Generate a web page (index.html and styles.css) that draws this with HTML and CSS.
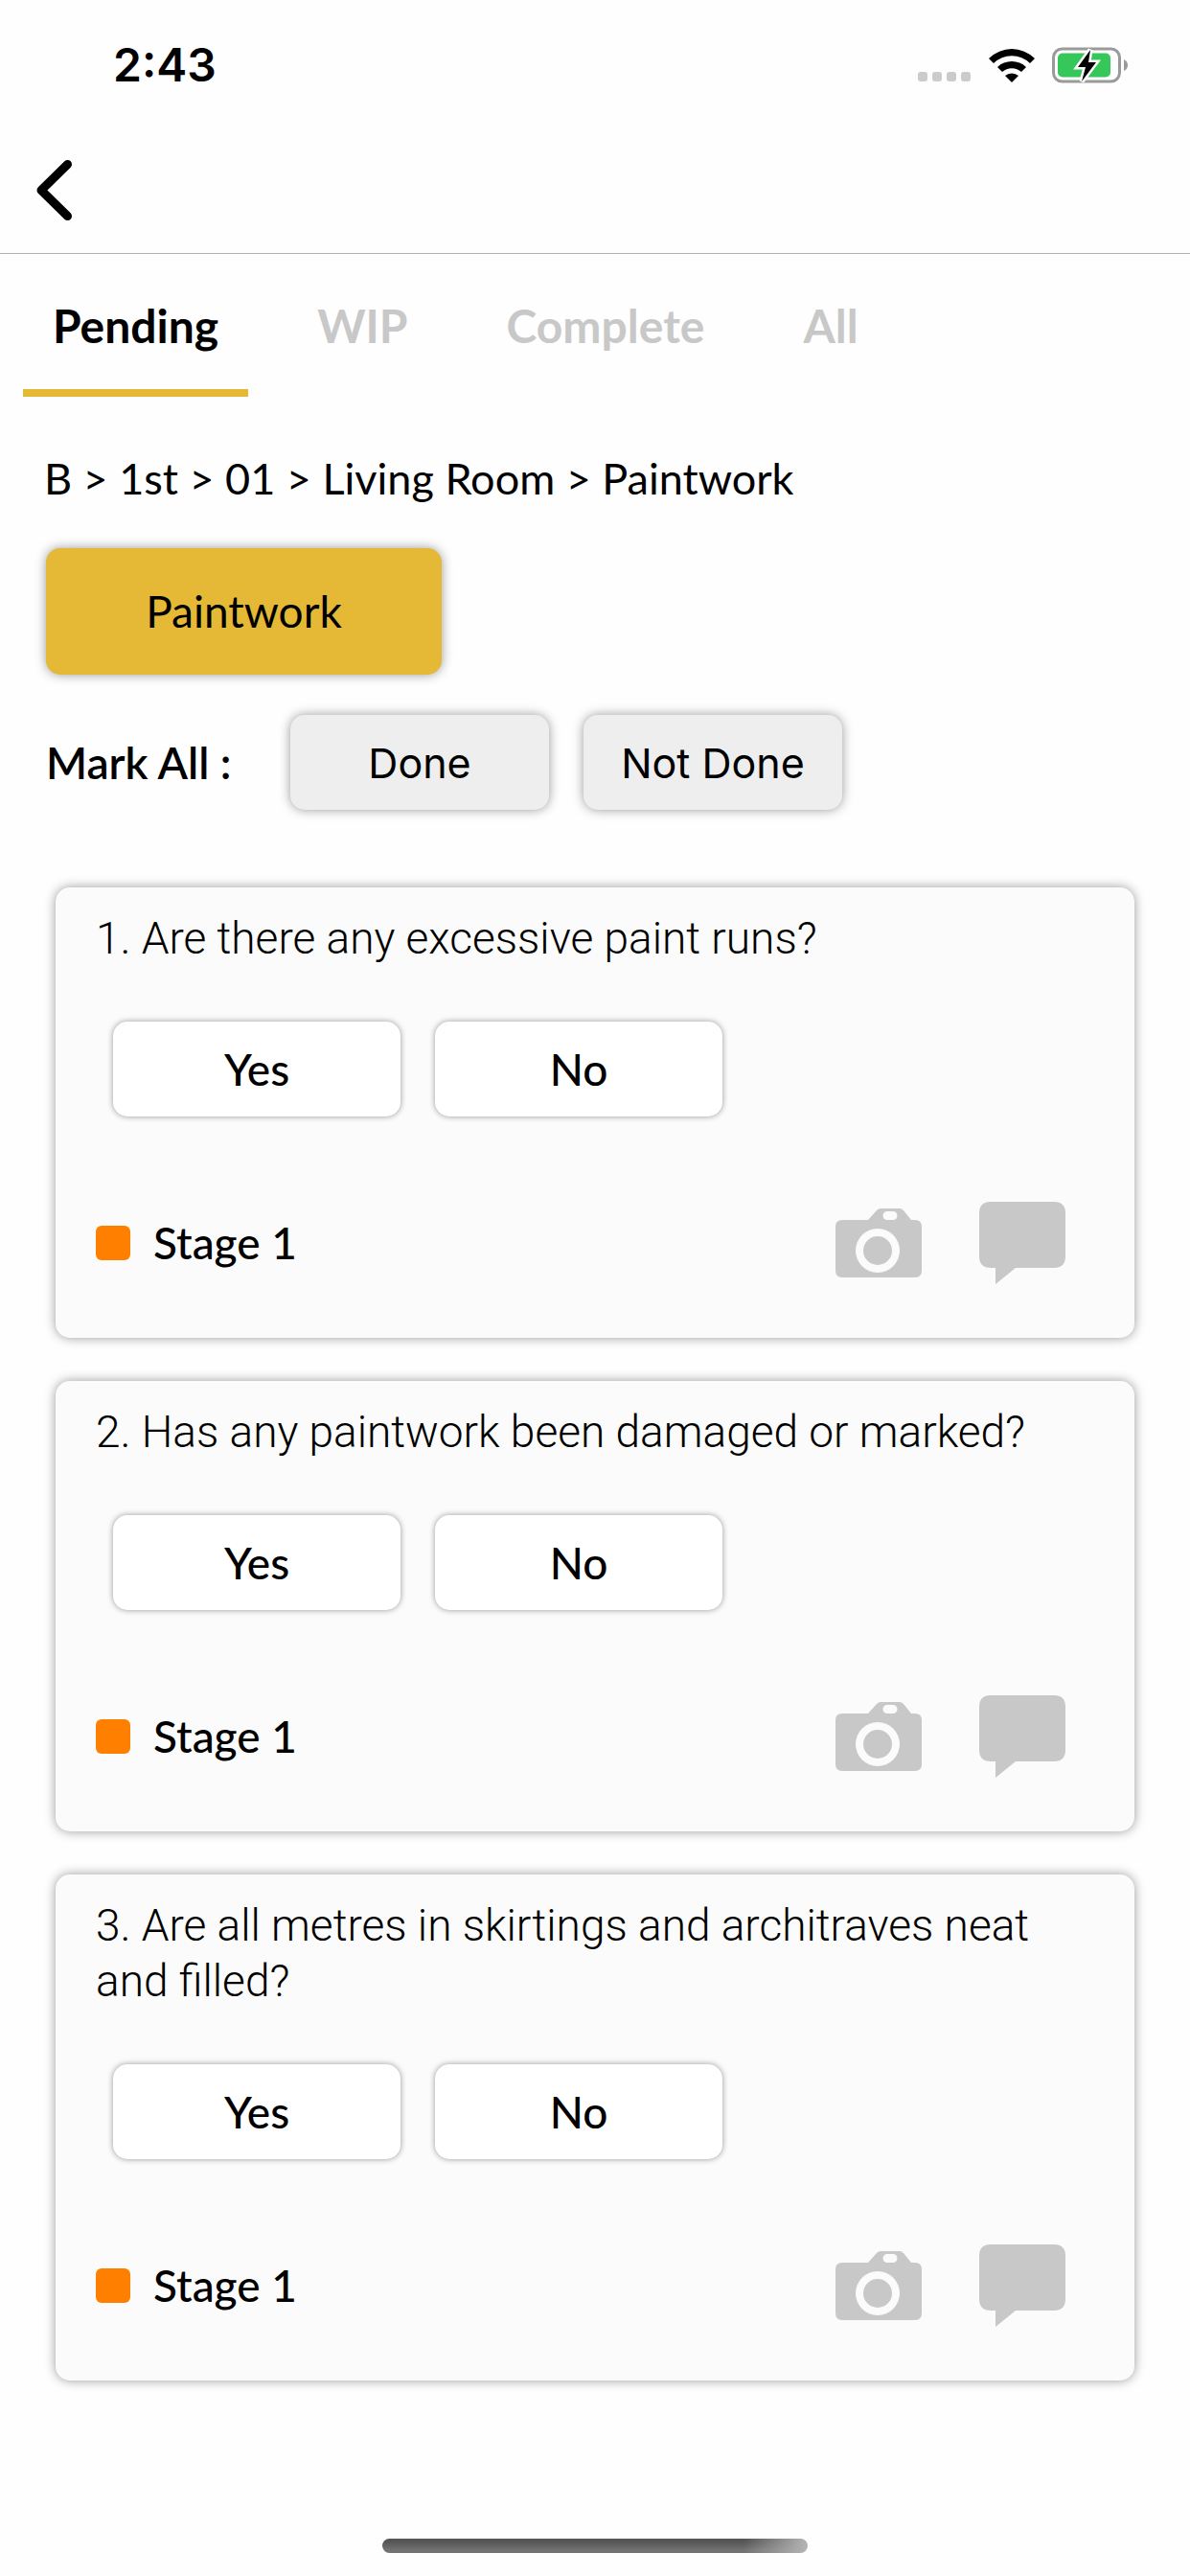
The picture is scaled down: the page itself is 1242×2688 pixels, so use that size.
FILE: index.html
```html
<!DOCTYPE html>
<html lang="en">
<head>
    <meta charset="UTF-8">
    <meta name="viewport" content="width=device-width, initial-scale=1.0">
    <title>Paintwork</title>
    <link rel="stylesheet" href="styles.css">
</head>
<body>

<!-- shared icons -->
<svg class="sprite" aria-hidden="true">
    <symbol id="camera" viewBox="0 0 90 72">
        <path fill-rule="evenodd" d="M7 12H34L43 2Q45 0 47 0H67Q69 0 71 2L79 12H83Q90 12 90 19V65Q90 72 83 72H7Q0 72 0 65V19Q0 12 7 12ZM54 3A4 4 0 0 0 54 12H60A4 4 0 0 0 60 3ZM44 21A23 23 0 1 0 44 67A23 23 0 1 0 44 21ZM44 29A15 15 0 1 1 44 59A15 15 0 1 1 44 29Z"/>
    </symbol>
    <symbol id="comment" viewBox="0 0 90 86">
        <path d="M12 0H78Q90 0 90 12V57Q90 69 78 69H38L17 86V69H12Q0 69 0 57V12Q0 0 12 0Z"/>
    </symbol>
</svg>

<div class="status-bar">
    <span class="time">2:43</span>
    <div class="status-icons">
        <svg width="56" height="12" viewBox="0 0 56 12" fill="#cbcbcb">
            <rect width="10" height="10" rx="3"/>
            <rect x="15" width="10" height="10" rx="3"/>
            <rect x="30" width="10" height="10" rx="3"/>
            <rect x="45" width="10" height="10" rx="3"/>
        </svg>
        <svg width="48" height="36" viewBox="0 0 48 36">
            <path d="M0 11A34 34 0 0 1 48 11L43 16A27 27 0 0 0 5 16Z"/>
            <path d="M9 20A22 22 0 0 1 39 20L34 25A15 15 0 0 0 14 25Z"/>
            <path d="M17 29A11 11 0 0 1 31 29L24 36Z"/>
        </svg>
        <svg width="80" height="38" viewBox="0 0 80 38">
            <rect x="1.5" y="2" width="69" height="34" rx="9" fill="none" stroke="#9a9a9a" stroke-width="3"/>
            <path d="M75 13Q79 15 79 19Q79 23 75 25Z" fill="#9a9a9a"/>
            <rect x="6" y="6.500" width="55" height="25" rx="5" fill="#35c759"/>
            <path d="M40 3L27 21H35L31 36L46 16H38Z" fill="#000" stroke="#fff" stroke-width="5" paint-order="stroke"/>
        </svg>
    </div>
</div>

<header class="header">
    <button class="back-btn" aria-label="Back">
        <svg width="37" height="63" viewBox="0 0 37 63">
            <path d="M32.500 4.500L5 31.500L32.500 58.500" fill="none" stroke="#000" stroke-width="9" stroke-linecap="round" stroke-linejoin="round"/>
        </svg>
    </button>
</header>

<nav class="tabs">
    <button class="tab active">Pending</button>
    <button class="tab">WIP</button>
    <button class="tab">Complete</button>
    <button class="tab">All</button>
</nav>

<main class="content">
    <p class="breadcrumb">B &gt; 1st &gt; 01 &gt; Living Room &gt; Paintwork</p>
    <button class="category-btn">Paintwork</button>

    <div class="mark-all">
        <span class="mark-label">Mark All :</span>
        <button class="mark-btn">Done</button>
        <button class="mark-btn">Not Done</button>
    </div>

    <div class="cards">
        <section class="card">
            <p class="question">1. Are there any excessive paint runs?</p>
            <div class="answers">
                <button class="answer-btn">Yes</button>
                <button class="answer-btn">No</button>
            </div>
            <div class="card-footer">
                <span class="stage">Stage 1</span>
                <button class="icon-btn" aria-label="Add photo"><svg width="90" height="72"><use href="#camera"/></svg></button>
                <button class="icon-btn" aria-label="Add comment"><svg width="90" height="86"><use href="#comment"/></svg></button>
            </div>
        </section>

        <section class="card">
            <p class="question">2. Has any paintwork been damaged or marked?</p>
            <div class="answers">
                <button class="answer-btn">Yes</button>
                <button class="answer-btn">No</button>
            </div>
            <div class="card-footer">
                <span class="stage">Stage 1</span>
                <button class="icon-btn" aria-label="Add photo"><svg width="90" height="72"><use href="#camera"/></svg></button>
                <button class="icon-btn" aria-label="Add comment"><svg width="90" height="86"><use href="#comment"/></svg></button>
            </div>
        </section>

        <section class="card">
            <p class="question">3. Are all metres in skirtings and architraves neat and filled?</p>
            <div class="answers">
                <button class="answer-btn">Yes</button>
                <button class="answer-btn">No</button>
            </div>
            <div class="card-footer">
                <span class="stage">Stage 1</span>
                <button class="icon-btn" aria-label="Add photo"><svg width="90" height="72"><use href="#camera"/></svg></button>
                <button class="icon-btn" aria-label="Add comment"><svg width="90" height="86"><use href="#comment"/></svg></button>
            </div>
        </section>
    </div>
</main>

<div class="home-indicator"></div>

</body>
</html>
```
FILE: styles.css
```css
* {
    margin: 0;
    padding: 0;
    box-sizing: border-box;
}
body {
    display: flex;
    flex-direction: column;
    min-height: 100vh;
    padding-bottom: 24px;
    font-family: Lato, sans-serif;
    font-size: 46px;
    line-height: 58px;
    color: #000;
    background-color: #fefefe;
}
button {
    border: none;
    background: none;
    font: inherit;
    color: inherit;
    cursor: pointer;
}
svg {
    display: block;
}
.sprite {
    position: absolute;
    width: 0;
    height: 0;
}
/* Status bar */
.status-bar {
    display: flex;
    justify-content: space-between;
    align-items: center;
    height: 132px;
    padding: 4px 64px 0 118px;
}
.time {
    font-family: Inter, sans-serif;
    font-size: 48px;
    font-weight: 600;
}
.status-icons {
    display: flex;
    align-items: center;
    gap: 18px;
}
.status-icons svg:first-child {
    align-self: flex-end;
}
/* Header */
.header {
    display: flex;
    align-items: center;
    height: 133px;
    padding: 0 38px;
    border-bottom: 1px solid #b2b2b2;
}
/* Tabs */
.tabs {
    display: flex;
    gap: 41px;
    padding: 0 24px;
}
.tab {
    height: 149px;
    padding: 0 31px;
    border-top: 8px solid transparent;
    border-bottom: 8px solid transparent;
    font-size: 48px;
    font-weight: 700;
    color: #c8c8c8;
}
.tab.active {
    color: #000;
    border-bottom-color: #e5b935;
}
/* Content */
.content {
    padding: 56px 46px 60px;
}
.breadcrumb {
    font-size: 45px;
}
.category-btn {
    min-width: 413px;
    height: 132px;
    margin: 44px 2px 42px;
    border-radius: 15px;
    background-color: #e5b935;
    box-shadow: 0 0 12px rgba(0, 0, 0, 0.4);
}
.mark-all {
    display: flex;
    align-items: center;
    gap: 36px;
}
.mark-label {
    width: 221px;
    padding-left: 2px;
    font-weight: 600;
}
.mark-btn {
    width: 270px;
    height: 99px;
    border-radius: 15px;
    background-color: #eee;
    font-family: Inter, sans-serif;
    font-size: 43px;
    box-shadow: 0 0 12px rgba(0, 0, 0, 0.4);
}
/* Question cards */
.cards {
    display: flex;
    flex-direction: column;
    gap: 45px;
    padding: 81px 12px 0;
}
.card {
    padding: 24px 72px 56px 42px;
    border-radius: 15px;
    background-color: #fbfbfb;
    box-shadow: 0 0 12px rgba(0, 0, 0, 0.4);
}
.question {
    font-family: Roboto, sans-serif;
    font-weight: 300;
}
.answers {
    display: flex;
    gap: 36px;
    margin: 58px 18px 89px;
}
.answer-btn {
    width: 300px;
    height: 99px;
    border-radius: 15px;
    background-color: #fff;
    font-weight: 500;
    box-shadow: 0 0 6px rgba(0, 0, 0, 0.4);
}
.card-footer {
    display: flex;
    align-items: center;
    gap: 60px;
}
.stage {
    display: flex;
    align-items: center;
    gap: 24px;
    margin-right: auto;
    font-weight: 500;
}
.stage::before {
    content: "";
    width: 36px;
    height: 36px;
    border-radius: 6px;
    background-color: #ff8000;
}
.icon-btn {
    fill: #c8c8c8;
}
/* Home indicator */
.home-indicator {
    width: 444px;
    height: 15px;
    margin: auto auto 0;
    border-radius: 8px;
    background: linear-gradient(90deg, transparent 85%, #b5b5b5), linear-gradient(#555 20%, #727272 80%);
}
```
